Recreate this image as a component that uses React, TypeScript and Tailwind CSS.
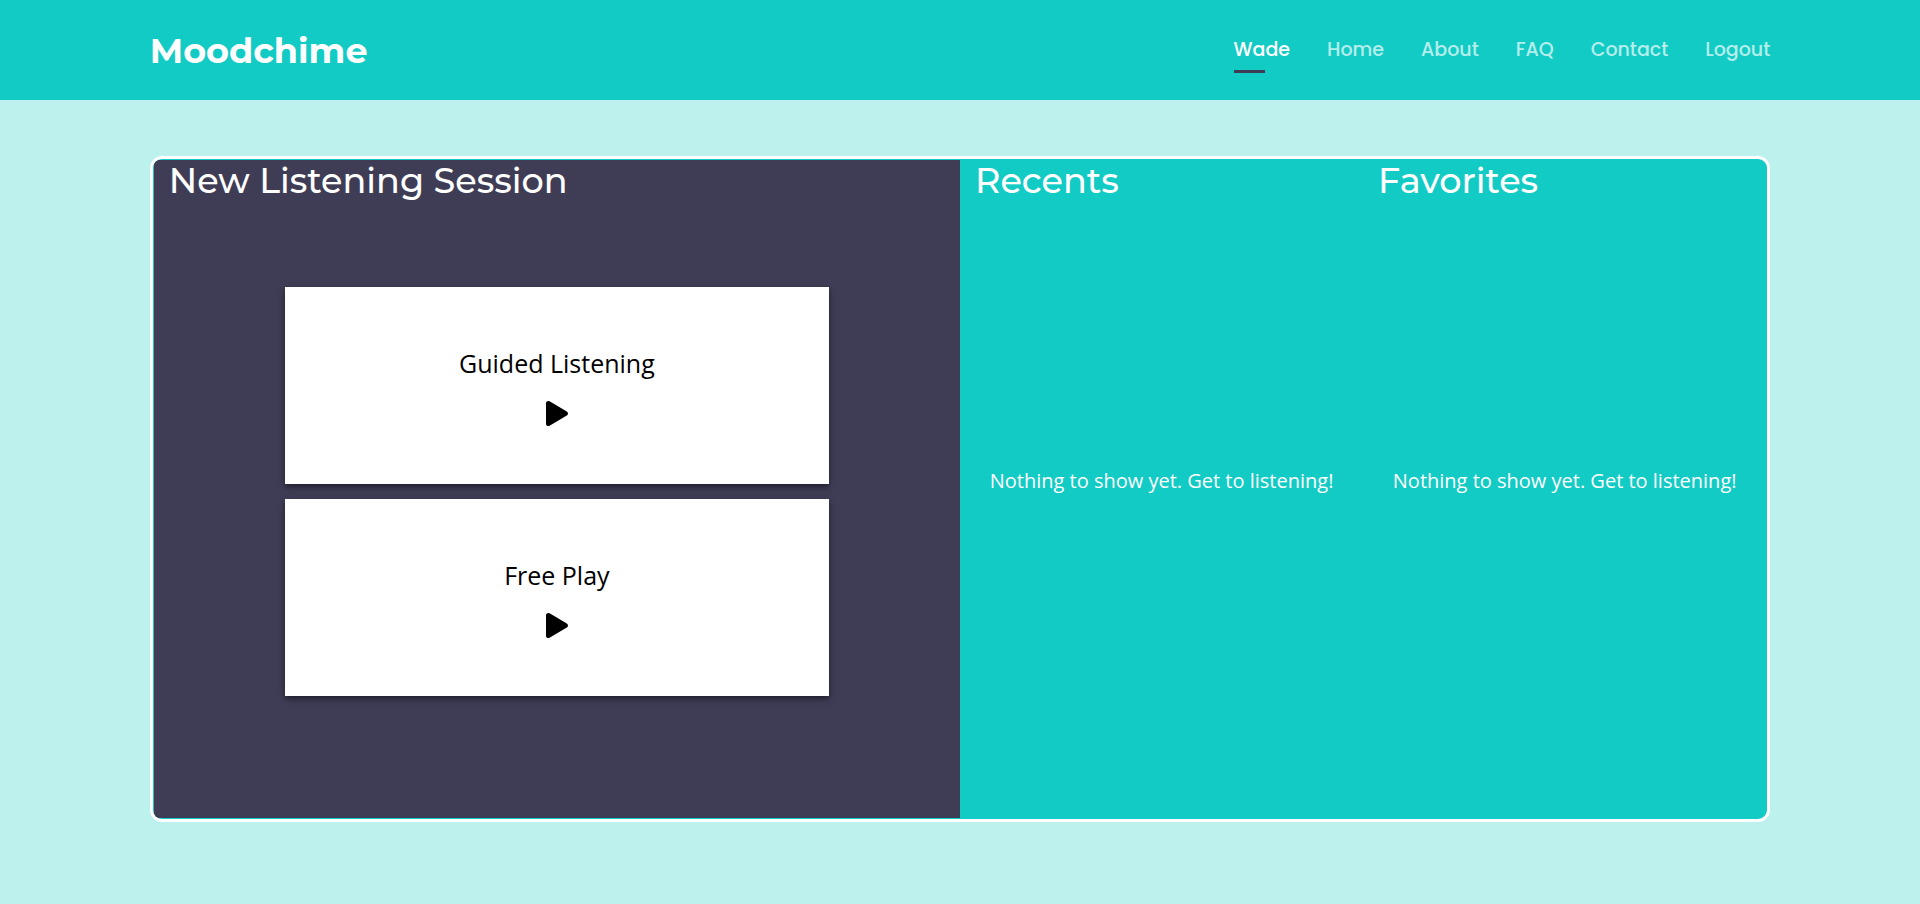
const links = ["Wade", "Home", "About", "FAQ", "Contact", "Logout"];

function PlayIcon() {
  return (
    <svg width="22" height="25" viewBox="0 0 448 512" preserveAspectRatio="none" aria-hidden="true">
      <path d="M424.400 214.700L72.400 6.600C43.800-10.300 0 6.100 0 47.900V464c0 37.500 40.700 60.100 72.400 41.300l352-208c31.400-18.500 31.500-64.100 0-82.600z" />
    </svg>
  );
}

function Session({ title }: { title: string }) {
  return (
    <button className="flex h-[197px] w-full flex-col items-center justify-center gap-[22px] bg-white pt-[2px] font-['Open_Sans',sans-serif] text-[25px] leading-8 text-black shadow-[0_3px_6px_rgba(0,0,0,0.5)]">
      <span>{title}</span>
      <PlayIcon />
    </button>
  );
}

function ListPanel({ title }: { title: string }) {
  return (
    <section className="flex w-1/4 flex-col px-[15px]">
      <h2 className="text-[35px] leading-[42px] font-medium">{title}</h2>
      <p className="flex grow items-center justify-center pb-[58px] font-['Open_Sans',sans-serif] text-xl">Nothing to show yet. Get to listening!</p>
    </section>
  );
}

export default function App() {
  return (
    <div className="min-h-screen bg-[#bcf1ee] font-[Montserrat,Inter,sans-serif] text-white">
      <header className="bg-[#12cbc4]">
        <div className="mx-auto flex h-[100px] w-[84.4%] items-center justify-between">
          <a href="#" className="pt-[2px] text-[35px] font-bold">Moodchime</a>
          <nav className="flex gap-[37px] font-[Poppins,Inter,sans-serif] text-[19px] leading-7 font-medium">
            {links.map((l, i) => (
              <a key={l} href="#" className={i === 0 ? "relative text-white" : "text-white/70"}>
                {l}
                {i === 0 && <span className="absolute -bottom-[9px] left-0 h-[3px] w-[31px] bg-[#3f3d56]" />}
              </a>
            ))}
          </nav>
        </div>
      </header>
      <main className="mx-auto w-[84.4%] pt-14">
        <div className="flex min-h-[666px] overflow-hidden rounded-xl border-[3px] border-white bg-[#12cbc4] p-px">
          <section className="flex w-1/2 flex-col bg-[#3f3d56]">
            <h2 className="px-[15px] text-[35px] leading-[42px] font-medium">New Listening Session</h2>
            <div className="mx-auto flex w-[67.4%] grow flex-col justify-center gap-[15px] pb-[38px]">
              <Session title="Guided Listening" />
              <Session title="Free Play" />
            </div>
          </section>
          <ListPanel title="Recents" />
          <ListPanel title="Favorites" />
        </div>
      </main>
    </div>
  );
}
